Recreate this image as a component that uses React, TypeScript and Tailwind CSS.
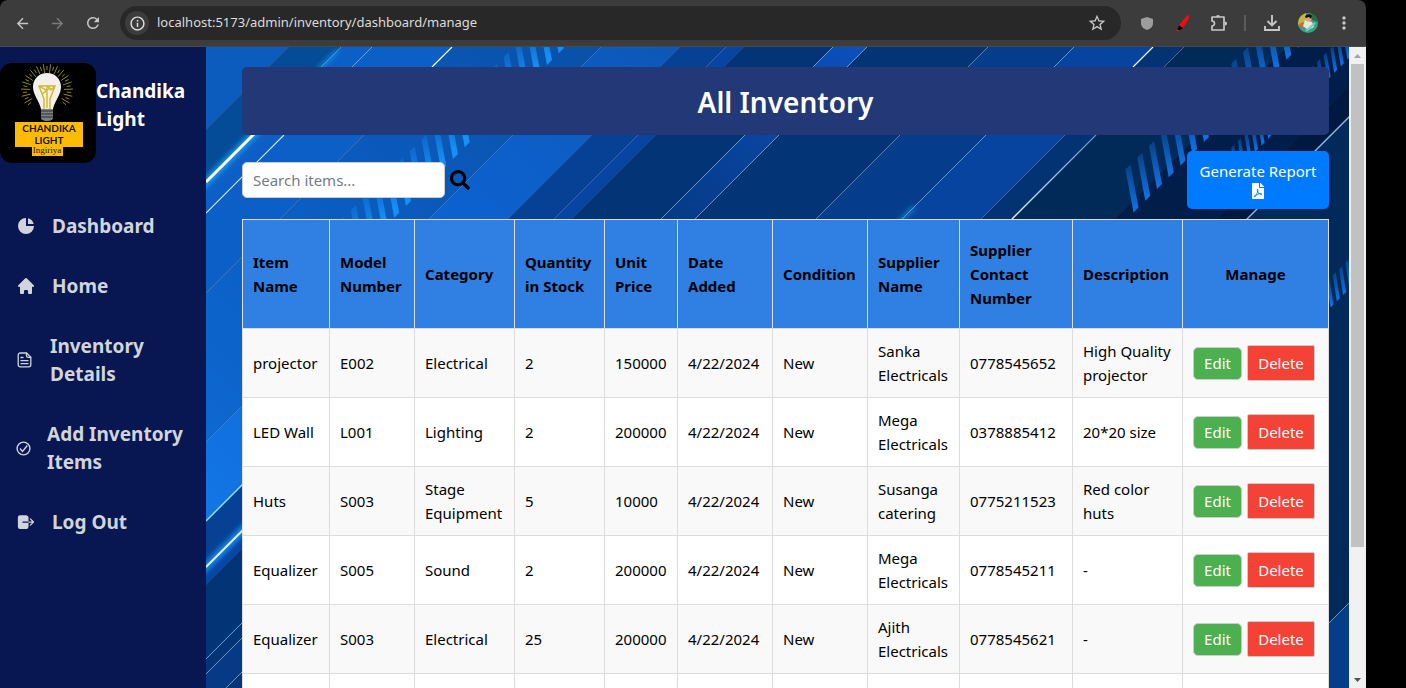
import React from 'react';
import {
  MdArrowBack,
  MdArrowForward,
  MdRefresh,
  MdInfoOutline,
  MdStarOutline,
  MdMoreVert,
} from 'react-icons/md';
import { HiChartPie, HiHome } from 'react-icons/hi';
import { FaSearch, FaFilePdf } from 'react-icons/fa';
import { IoLogOut } from 'react-icons/io5';

type Item = {
  name: string;
  model: string;
  category: string;
  quantity: string;
  price: string;
  date: string;
  condition: string;
  supplier: string;
  contact: string;
  description: string;
};

const items: Item[] = [
  { name: 'projector', model: 'E002', category: 'Electrical', quantity: '2', price: '150000', date: '4/22/2024', condition: 'New', supplier: 'Sanka Electricals', contact: '0778545652', description: 'High Quality projector' },
  { name: 'LED Wall', model: 'L001', category: 'Lighting', quantity: '2', price: '200000', date: '4/22/2024', condition: 'New', supplier: 'Mega Electricals', contact: '0378885412', description: '20*20 size' },
  { name: 'Huts', model: 'S003', category: 'Stage Equipment', quantity: '5', price: '10000', date: '4/22/2024', condition: 'New', supplier: 'Susanga catering', contact: '0775211523', description: 'Red color huts' },
  { name: 'Equalizer', model: 'S005', category: 'Sound', quantity: '2', price: '200000', date: '4/22/2024', condition: 'New', supplier: 'Mega Electricals', contact: '0778545211', description: '-' },
  { name: 'Equalizer', model: 'S003', category: 'Electrical', quantity: '25', price: '200000', date: '4/22/2024', condition: 'New', supplier: 'Ajith Electricals', contact: '0778545621', description: '-' },
];

const columns = [
  { label: 'Item Name', width: 'w-[87px]' },
  { label: 'Model Number', width: 'w-[85px]' },
  { label: 'Category', width: 'w-[100px]' },
  { label: 'Quantity in Stock', width: 'w-[90px]' },
  { label: 'Unit Price', width: 'w-[73px]' },
  { label: 'Date Added', width: 'w-[95px]' },
  { label: 'Condition', width: 'w-[95px]' },
  { label: 'Supplier Name', width: 'w-[92px]' },
  { label: 'Supplier Contact Number', width: 'w-[113px]' },
  { label: 'Description', width: 'w-[110px]' },
];

// A diagonal band covers every point whose x + y lies between two sums.
const bands: { from: number; to: number; fill: string }[] = [
  { from: 240, to: 336, fill: '#0b5cbd' },
  { from: 336, to: 388, fill: '#044b98' },
  { from: 388, to: 499, fill: '#0c5fc6' },
  { from: 499, to: 648, fill: 'url(#wide)' },
  { from: 648, to: 727, fill: 'url(#bright)' },
  { from: 727, to: 773, fill: '#064196' },
  { from: 773, to: 791, fill: '#0845a3' },
  { from: 791, to: 880, fill: '#033475' },
  { from: 880, to: 914, fill: 'url(#ribbon)' },
  { from: 914, to: 1035, fill: '#033475' },
  { from: 1035, to: 1121, fill: '#053c8c' },
  { from: 1121, to: 1200, fill: '#07449f' },
  { from: 1200, to: 1231, fill: '#033372' },
  { from: 1231, to: 1335, fill: '#012a59' },
  { from: 1335, to: 1438, fill: '#001e49' },
  { from: 1438, to: 1466, fill: '#001940' },
  { from: 1466, to: 1952, fill: '#012a5b' },
  { from: 1952, to: 2100, fill: '#053d89' },
];

const lines: { sum: number; opacity: number; width: number }[] = [
  { sum: 336, opacity: 0.15, width: 1 },
  { sum: 419, opacity: 0.55, width: 1 },
  { sum: 499, opacity: 0.3, width: 1 },
  { sum: 648, opacity: 0.3, width: 1 },
  { sum: 727, opacity: 0.2, width: 1 },
  { sum: 773, opacity: 0.3, width: 1 },
  { sum: 791, opacity: 0.15, width: 1 },
  { sum: 880, opacity: 0.6, width: 1 },
  { sum: 914, opacity: 0.6, width: 1 },
  { sum: 1035, opacity: 0.5, width: 1 },
  { sum: 1121, opacity: 0.6, width: 1 },
  { sum: 1200, opacity: 0.35, width: 1 },
  { sum: 1231, opacity: 0.4, width: 1 },
  { sum: 1466, opacity: 0.8, width: 1.3 },
  { sum: 1952, opacity: 0.6, width: 1 },
];

function Bars({ x, sum, step, count, width, length, slant, fill }: { x: number; sum: number; step: number; count: number; width: number; length: number; slant: number; fill: string }) {
  return (
    <g fill={fill}>
      {Array.from({ length: count }, (_, i) => {
        const right = x + i * step;
        const bottom = sum - right;
        return (
          <path
            key={i}
            d={`M${right - width / 2} ${bottom + width / 2}l${width} ${-width}l${-slant} ${-length}l${-width} ${width}z`}
          />
        );
      })}
    </g>
  );
}

function Backdrop() {
  return (
    <svg className="absolute inset-0 h-full w-full" viewBox="206 47 1143 641" preserveAspectRatio="xMinYMin slice" aria-hidden="true">
      <defs>
        <linearGradient id="wide" gradientUnits="userSpaceOnUse" x1="600" y1="47" x2="206" y2="441">
          <stop offset="0" stopColor="#0951a8" />
          <stop offset="0.5" stopColor="#0b5bbf" />
          <stop offset="1" stopColor="#0d68cf" />
        </linearGradient>
        <linearGradient id="bright" gradientUnits="userSpaceOnUse" x1="680" y1="47" x2="206" y2="521">
          <stop offset="0" stopColor="#0c58b8" />
          <stop offset="0.4" stopColor="#0d61cf" />
          <stop offset="1" stopColor="#1375e4" />
        </linearGradient>
        <linearGradient id="ribbon" gradientUnits="userSpaceOnUse" x1="867" y1="47" x2="680" y2="234">
          <stop offset="0" stopColor="#0b50bd" />
          <stop offset="1" stopColor="#063a85" />
        </linearGradient>
        <linearGradient id="streak" gradientUnits="userSpaceOnUse" x1="1096" y1="135" x2="1012" y2="219">
          <stop offset="0" stopColor="#a5d4ff" stopOpacity="0.4" />
          <stop offset="1" stopColor="#e8f5ff" />
        </linearGradient>
        <linearGradient id="barLight" x1="0" y1="0" x2="0" y2="1">
          <stop offset="0" stopColor="#1383e6" stopOpacity="0.35" />
          <stop offset="0.8" stopColor="#1690f4" />
        </linearGradient>
        <linearGradient id="barDeep" x1="0" y1="0" x2="0" y2="1">
          <stop offset="0" stopColor="#0f66cc" stopOpacity="0.4" />
          <stop offset="0.9" stopColor="#1070e2" />
        </linearGradient>
        <filter id="glow" x="-30%" y="-30%" width="160%" height="160%">
          <feGaussianBlur stdDeviation="2.5" />
        </filter>
      </defs>
      {bands.map((b) => (
        <path key={b.from} fill={b.fill} d={`M${b.from - 47} 47H${b.to - 47}L${b.to - 688} 688H${b.from - 688}z`} />
      ))}
      {lines.map((l) => (
        <path key={l.sum} stroke="#b9dcff" strokeOpacity={l.opacity} strokeWidth={l.width} d={`M${l.sum - 47} 47L${l.sum - 688} 688`} />
      ))}
      <path stroke="#ffffff" strokeWidth="1.2" d="M452 47L432 67M1153 47L1133 67" />
      <path stroke="#e8f5ff" strokeOpacity="0.8" strokeWidth="1.2" d="M284 135L206 213" />
      <path stroke="url(#streak)" strokeWidth="1.5" d="M1096 135L1012 219" />
      <path stroke="#22b4ff" strokeWidth="8" filter="url(#glow)" d="M270 118L196 192" strokeOpacity="0.65" />
      <path stroke="#22b4ff" strokeWidth="4" filter="url(#glow)" d="M316 72L338 50M892 229L914 207" strokeOpacity="0.5" />
      <path stroke="#ffffff" strokeWidth="3" d="M254 134L206 182" />
      <path stroke="#59b5f5" strokeOpacity="0.7" d="M342 46L320 68" />
      <path stroke="#8fdcff" strokeWidth="1.5" d="M206 521L244 483" />
      <path stroke="#22a4ff" strokeWidth="8" filter="url(#glow)" d="M196 577L252 521" strokeOpacity="0.7" />
      <path stroke="#d5f4ff" strokeWidth="2" d="M206 567L244 529" />
      <path stroke="#5b9be0" d="M206 659L244 621" />
      <Bars x={349.7} sum={612} step={11.75} count={20} width={5} length={43} slant={8} fill="url(#barLight)" />
      <Bars x={1136} sum={1346} step={11.75} count={15} width={5} length={43} slant={8} fill="url(#barDeep)" />
      <Bars x={1236.7} sum={1407} step={6.6} count={19} width={3} length={24} slant={4} fill="url(#barDeep)" />
      <Bars x={1332} sum={1638} step={6.3} count={5} width={3} length={26} slant={4} fill="url(#barDeep)" />
    </svg>
  );
}

function Logo() {
  const rays = Array.from({ length: 33 }, (_, i) => (-218 + i * 8) * (Math.PI / 180));
  return (
    <svg className="h-[100px] w-24 shrink-0" viewBox="0 0 96 100" role="img" aria-label="Chandika Light Ingiriya">
      <rect width="96" height="100" rx="12" fill="#000" />
      {rays.map((a, i) => {
        const inner = i % 2 ? 17 : 20;
        const outer = i % 2 ? 26 : 24;
        return (
          <path
            key={i}
            stroke="#a3961c"
            strokeWidth="0.9"
            d={`M${47 + inner * Math.cos(a)} ${27 + inner * Math.sin(a)}L${47 + outer * Math.cos(a)} ${27 + outer * Math.sin(a)}`}
          />
        );
      })}
      <path fill="#f3efe9" d="M47 10C39 10 33 16 33 24c0 8 6 13 8 22h12c2-9 8-14 8-22 0-8-6-14-14-14z" />
      <path fill="none" stroke="#cdb92a" strokeWidth="1.4" d="M44 46V36L39 23h16l-5 13v10M39 23l7 4 2-4 3 4 4-4M42 31l8-6M47 28v17" />
      <path fill="#7c8084" d="M41 46h12v9c0 2-3 3-6 3s-6-1-6-3z" />
      <path stroke="#2c2f33" strokeWidth="1.2" d="M41 48h12M41 51h12M41 54h12" />
      <rect x="15" y="59" width="68" height="25" fill="#fdbb05" />
      <rect x="32" y="84" width="31" height="9" fill="#fdbb05" />
      <g textAnchor="middle" fill="#17150a">
        <text x="49" y="69" fontSize="10" fontWeight="700" fontFamily="Lato, sans-serif">CHANDIKA</text>
        <text x="49" y="81" fontSize="10" fontWeight="700" fontFamily="Lato, sans-serif">LIGHT</text>
        <text x="47" y="90" fontSize="9" fontWeight="400" fontFamily="'Liberation Serif', serif">Ingiriya</text>
      </g>
    </svg>
  );
}

function BrowserBar() {
  return (
    <header className="flex h-[47px] shrink-0 items-center rounded-t-lg border-b border-[#484848] bg-[#3c3c3c] text-[#c7c7c7]">
      <div className="flex w-[120px] items-center justify-between pl-3.5 pr-[18px]">
        <button aria-label="Back"><MdArrowBack size={17} /></button>
        <button aria-label="Forward" className="text-[#7b7b7b]"><MdArrowForward size={17} /></button>
        <button aria-label="Reload"><MdRefresh size={18} /></button>
      </div>
      <div className="flex h-[34px] min-w-0 flex-1 items-center rounded-full bg-[#282828] pl-[5px] pr-3.5">
        <span className="flex size-6 items-center justify-center rounded-full bg-[#3c3c3c] text-[#e3e3e3]">
          <MdInfoOutline size={17} />
        </span>
        <input
          aria-label="Address"
          readOnly
          value="localhost:5173/admin/inventory/dashboard/manage"
          className="ml-2 min-w-0 flex-1 bg-transparent text-[13px] text-[#dcdcdc] outline-none"
        />
        <button aria-label="Bookmark"><MdStarOutline size={20} /></button>
      </div>
      <div className="flex items-center pl-5 pr-3">
        <svg className="w-3" viewBox="0 0 12 13" aria-hidden="true">
          <path fill="#9d9d9d" d="M6 0l6 2v4c0 4-3 6-6 7-3-1-6-3-6-7V2z" />
        </svg>
        <svg className="ml-[23px] w-3.5" viewBox="0 0 14 16" aria-hidden="true">
          <path fill="#f20d0d" d="M10 1.500L12.500 0 13 1l-.5 3.500L7 13l-4-2.500z" />
          <path fill="#120404" d="M3 10.500L7 13l-3 2H1.500z" />
          <path stroke="#f20d0d" d="M0 15.500h3" />
        </svg>
        <button aria-label="Extensions" className="ml-5">
          <svg className="h-[18px] w-[18px]" viewBox="0 0 18 18" fill="none" stroke="#c7c7c7" strokeWidth="1.700" strokeLinejoin="round" aria-hidden="true">
            <path d="M2 3h12v13H2v-4a2.500 2.500 0 0 0 0-5z" />
            <path fill="#c7c7c7" stroke="none" d="M6 3a2 2 0 0 1 4 0zM15 7.500a2 2 0 0 1 0 4z" />
          </svg>
        </button>
        <span className="ml-4 h-4 w-0.5 bg-[#5b5b5b]" />
        <button aria-label="Downloads" className="ml-[17px]">
          <svg className="h-[18px] w-[18px]" viewBox="0 0 18 18" fill="none" stroke="#c7c7c7" strokeWidth="1.900" aria-hidden="true">
            <path d="M9 1v10M4.500 7L9 11.500 13.500 7M2 12v4h14v-4" />
          </svg>
        </button>
        <svg className="ml-[17px] size-5" viewBox="0 0 20 20" role="img" aria-label="Profile">
          <clipPath id="avatar"><circle cx="10" cy="10" r="10" /></clipPath>
          <g clipPath="url(#avatar)">
            <rect width="20" height="20" fill="#3f9e86" />
            <path fill="#c3b83a" d="M0 0h8v8L0 13z" />
            <path fill="#2e6a3a" d="M13 0h7v9l-6-2z" />
            <path fill="#d9623a" d="M1 11l4-2 2 3-4 3z" />
            <path fill="#ece4d6" d="M7 7l7 2 2 5-6 3-5-4z" />
            <circle cx="10.500" cy="5.500" r="3" fill="#dba47c" />
            <path fill="#17130f" d="M7 4c0-3 6-4 7-1l-1 3-2-2-3 1z" />
            <path stroke="#58dcc4" strokeWidth="2" d="M8 18l9-8" />
          </g>
        </svg>
        <button aria-label="Menu" className="ml-4"><MdMoreVert size={20} /></button>
      </div>
    </header>
  );
}

function DocumentIcon() {
  return (
    <svg className="h-4 w-[18px] shrink-0" viewBox="0 0 18 16" fill="none" stroke="currentColor" strokeWidth="1.3" strokeLinejoin="round" strokeLinecap="round" aria-hidden="true">
      <path d="M4.200 1h6.300l4.300 4.300v7.500a2 2 0 0 1-2 2H4.200a2 2 0 0 1-2-2V3a2 2 0 0 1 2-2z" />
      <path d="M10.500 1v2.800a1.500 1.500 0 0 0 1.500 1.500h2.800M5 5.500h2M5 8.700h7M5 11.700h7" />
    </svg>
  );
}

function CheckIcon() {
  return (
    <svg className="h-[15px] w-[15px] shrink-0" viewBox="0 0 15 15" fill="none" stroke="currentColor" strokeWidth="1.4" aria-hidden="true">
      <circle cx="7.500" cy="7.500" r="6.400" />
      <path d="M4 7.500l2.500 3 4.800-6" />
    </svg>
  );
}

const navItems = [
  { label: 'Dashboard', icon: <HiChartPie className="h-5 w-5 shrink-0" /> },
  { label: 'Home', icon: <HiHome className="h-5 w-5 shrink-0" /> },
  { label: 'Inventory Details', icon: <DocumentIcon /> },
  { label: 'Add Inventory Items', icon: <CheckIcon /> },
  { label: 'Log Out', icon: <IoLogOut className="h-5 w-5 shrink-0" /> },
];

function Sidebar() {
  return (
    <aside className="w-[206px] shrink-0 bg-[#081751] pt-4 font-bold">
      <div className="flex items-start">
        <Logo />
        <p className="mt-3.5 text-[19px] leading-7 text-white">Chandika Light</p>
      </div>
      <nav className="mt-[33px]">
        {navItems.map((n) => (
          <a key={n.label} href="#" className="flex items-center gap-4 py-4 pl-4 pr-2 text-[19px] leading-7 text-[#d1d5db]">
            {n.icon}
            {n.label}
          </a>
        ))}
      </nav>
    </aside>
  );
}

const cell = 'border border-[#dddddd] px-2.5';

function InventoryTable() {
  return (
    <table className="mt-2.5 w-full table-fixed border-collapse text-[15px] leading-6 text-black">
      <thead>
        <tr className="h-[109px] bg-[#307fe2] text-left">
          {columns.map((c) => (
            <th key={c.label} className={`${cell} ${c.width} font-bold`}>{c.label}</th>
          ))}
          <th className={`${cell} w-[146px] text-center font-bold`}>Manage</th>
        </tr>
      </thead>
      <tbody>
        {items.map((r) => (
          <tr key={r.contact} className="h-[69px] bg-white odd:bg-[#f9f9f9]">
            <td className={cell}>{r.name}</td>
            <td className={cell}>{r.model}</td>
            <td className={cell}>{r.category}</td>
            <td className={cell}>{r.quantity}</td>
            <td className={cell}>{r.price}</td>
            <td className={cell}>{r.date}</td>
            <td className={cell}>{r.condition}</td>
            <td className={cell}>{r.supplier}</td>
            <td className={cell}>{r.contact}</td>
            <td className={cell}>{r.description}</td>
            <td className={cell}>
              <div className="flex items-center gap-[5px]">
                <button className="h-[33px] w-[49px] rounded-[5px] border border-[#cccccc] bg-[#4caf50] text-white">Edit</button>
                <button className="h-9 w-[68px] rounded-[2px] border border-[#cccccc] bg-[#f44336] text-white">Delete</button>
              </div>
            </td>
          </tr>
        ))}
        <tr className="h-[69px] bg-white">
          {[...columns, { label: 'Manage' }].map((c) => (
            <td key={c.label} className={cell} />
          ))}
        </tr>
      </tbody>
    </table>
  );
}

function Scrollbar() {
  return (
    <div className="flex w-[17px] shrink-0 flex-col items-center bg-[#f1f1f1]" aria-hidden="true">
      <svg className="h-[17px] w-[17px] shrink-0" viewBox="0 0 17 17"><path fill="#a3a3a3" d="M5 11l3.500-4 3.500 4z" /></svg>
      <div className="w-[13px] grow-[483] bg-[#c1c1c1]" />
      <div className="grow-[124]" />
      <svg className="h-[17px] w-[17px] shrink-0" viewBox="0 0 17 17"><path fill="#505050" d="M5 7l3.500 4L12 7z" /></svg>
    </div>
  );
}

export default function App() {
  return (
    <div className="h-screen overflow-hidden bg-black pr-10 font-['Noto_Sans',sans-serif]">
      <div className="flex h-full flex-col">
        <BrowserBar />
        <div className="flex min-h-0 flex-1">
          <Sidebar />
          <main className="relative min-w-0 flex-1 overflow-hidden">
            <Backdrop />
            <div className="relative pb-5 pl-9 pr-5 pt-5">
              <h1 className="rounded-[5px] bg-[#233876] pb-3.5 pt-4 text-center text-[28px] font-semibold leading-[38px] text-white">All Inventory</h1>
              <div className="mt-4 flex items-center justify-between">
                <form className="flex items-center gap-[5px]" onSubmit={(e) => e.preventDefault()}>
                  <input
                    type="search"
                    aria-label="Search items"
                    placeholder="Search items..."
                    className="h-9 w-[203px] rounded-[5px] border border-[#cccccc] bg-white px-2.5 text-[15px] text-black outline-none placeholder:text-[#757b87]"
                  />
                  <button aria-label="Search" className="text-black"><FaSearch size={20} /></button>
                </form>
                <button className="flex h-[58px] w-[142px] flex-col items-center justify-center gap-0.5 rounded-[5px] bg-[#007bff] text-[15px] leading-5 text-white">
                  Generate Report
                  <FaFilePdf size={16} />
                </button>
              </div>
              <InventoryTable />
            </div>
          </main>
          <Scrollbar />
        </div>
      </div>
    </div>
  );
}
